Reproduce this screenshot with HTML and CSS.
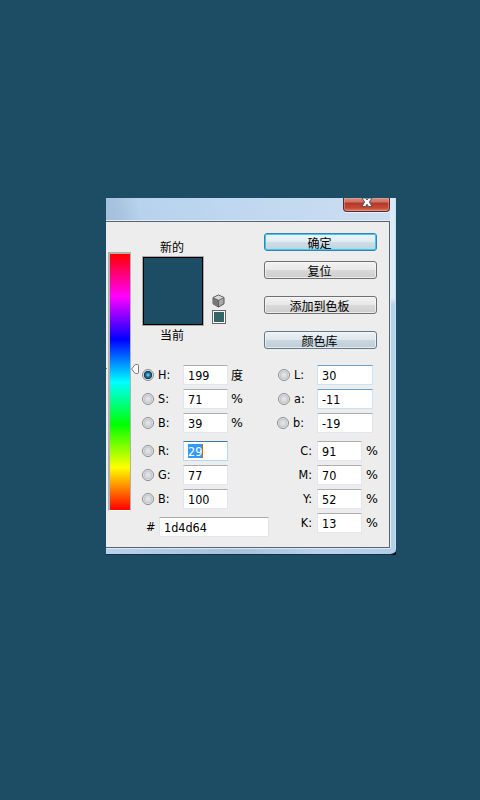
FILE: index.html
```html
<!DOCTYPE html>
<html lang="zh-CN">
<head>
<meta charset="utf-8">
<title>拾色器</title>
<link rel="stylesheet" href="styles.css">
</head>
<body>
<div class="corner">
<main class="dialog">
  <header class="titlebar"><button class="close" aria-label="关闭"><svg width="12" height="10" viewBox="0 0 12 10"><path d="M1 0h3.5L6 2 7.5 0H11L8.4 4 11 8.5H7.4L6 6.2 4.6 8.5H1L3.6 4Z" fill="#fff" stroke="#50545f"/></svg></button></header>
  <div class="content">
    <div class="hue-area">
      <i class="tick"></i>
      <div class="hue"></div>
      <svg class="thumb" width="8" height="10" viewBox="0 0 8 10"><path d="M.7 5 3.5 1.2Q4 .5 5 .5h1.5q1 0 1 1v7q0 1-1 1H5q-1 0-1.5-.7Z" fill="#fafafa" stroke="#777"/></svg>
    </div>
    <section class="left">
      <div class="preview">
        <div class="compare">
          <span>新的</span>
          <div class="swatch"></div>
          <span>当前</span>
        </div>
        <div class="websafe">
          <svg width="13" height="14" viewBox="0 0 13 14"><path d="M6.5 1 12 3.5v6.3L6.5 13 1 9.8V3.5Z" fill="#aaa" stroke="#555"/><path d="M6.5 1.4 11.5 3.7 6.5 6.2 1.5 3.7Z" fill="#d8d8d8"/><path d="M1.5 4 6.5 6.5v6L1.5 9.5Z" fill="#777"/><path d="M1 3.7 6.5 6.3 12 3.7M6.5 6.3V13" fill="none" stroke="#555" stroke-width=".8"/></svg>
          <i class="safe"></i>
        </div>
      </div>
      <div class="rows">
        <div class="row"><i class="radio on"></i><label>H:</label><span class="field">199</span><b class="cjk">度</b></div>
        <div class="row"><i class="radio"></i><label>S:</label><span class="field">71</span><b>%</b></div>
        <div class="row"><i class="radio"></i><label>B:</label><span class="field">39</span><b>%</b></div>
        <div class="row gap"><i class="radio"></i><label>R:</label><span class="field focus"><mark>29</mark></span></div>
        <div class="row"><i class="radio"></i><label>G:</label><span class="field">77</span></div>
        <div class="row"><i class="radio"></i><label>B:</label><span class="field">100</span></div>
        <div class="row hex"><label>#</label><span class="field">1d4d64</span></div>
      </div>
    </section>
    <section class="right">
      <div class="buttons">
        <button class="btn ok">确定</button>
        <button class="btn">复位</button>
        <button class="btn add">添加到色板</button>
        <button class="btn lib">颜色库</button>
      </div>
      <div class="rows">
        <div class="row"><i class="radio"></i><label>L:</label><span class="field wide blue">30</span></div>
        <div class="row"><i class="radio"></i><label>a:</label><span class="field wide blue">-11</span></div>
        <div class="row shift"><i class="radio"></i><label>b:</label><span class="field wide">-19</span></div>
        <div class="row gap ink"><label>C:</label><span class="field">91</span><b>%</b></div>
        <div class="row ink"><label>M:</label><span class="field">70</span><b>%</b></div>
        <div class="row ink"><label>Y:</label><span class="field">52</span><b>%</b></div>
        <div class="row ink"><label>K:</label><span class="field">13</span><b>%</b></div>
      </div>
    </section>
  </div>
</main>
</div>
</body>
</html>
```
FILE: styles.css
```css
* { box-sizing: border-box; }
body {
  margin: 0;
  height: 800px;
  padding: 198px 0 0 106px;
  overflow: hidden;
  background: #1d4d64;
  color: #000;
  font: 12.5px/20px "DejaVu Sans Condensed", "DejaVu Sans", "Noto Sans CJK SC", sans-serif;
  font-stretch: condensed;
}
.corner {
  width: 290px;
  height: 357px;
  background: linear-gradient(#111, #111) right bottom / 6px 6px no-repeat;
}
.dialog {
  width: 290px;
  height: 357px;
  padding-right: 6px;
  border-bottom: 1px solid #17303f;
  border-radius: 0 0 6px 0;
  background:
    linear-gradient(#dbe8f6 0, #e0edf9 100px, #b8d2ec 106px, #b5cfe9 100%) right / 6px 100% no-repeat,
    linear-gradient(90deg, #b9d3ee, #a5c1dc 45%, #b9d3ee 75%, #b0cce8) bottom / 100% 8px no-repeat,
    linear-gradient(60deg, #a4bfdc 0, #b5d0eb 40px, #b6d1ed 180px, #ccdff2 100%);
  box-shadow: inset -1px 0 #c2e0f2;
}
.titlebar {
  display: flex;
  justify-content: flex-end;
  height: 23px;
  background: linear-gradient(75deg, #a4bfdc 0, #a9c4e0 16px, #b5d0eb00 36px);
}
.close {
  display: flex;
  justify-content: center;
  width: 47px;
  height: 14px;
  padding: 0;
  border: 1px solid #562b30;
  border-top: 0;
  border-radius: 0 0 4px 4px;
  background: linear-gradient(#d48c7e 0, #cb7467 4px, #b73626 5px, #c64a35 10px, #dc8068 100%);
  box-shadow: inset 0 0 0 1px #e6a99d80, 0 1px #e8f2fb;
}
.close svg { flex: none; margin-left: 1px; }
.content {
  display: flex;
  height: 327px;
  border: 1px solid #59636e;
  border-left: 0;
  background: #ededed;
  box-shadow: 0 -1px #e4eef8, 1px 0 #e4eef8, 0 1px #dce9f5;
}
.hue-area {
  display: flex;
  width: 36px;
  padding-top: 30px;
}
.tick {
  width: 1px;
  height: 1px;
  margin: 116px 1px 0 0;
  background: #777;
}
.hue {
  width: 23px;
  height: 259px;
  border: solid #b0b0b0;
  border-width: 2px 1px 1px 2px;
  border-bottom-color: #fff;
  background: linear-gradient(#f00, #f0f 16.67%, #00f 33.33%, #0ff 50%, #0f0 66.67%, #ff0 83.33%, #f00);
}
.thumb { margin: 112px 0 0; flex: none; }
.left { width: 122px; }
.preview {
  display: flex;
  height: 143px;
  padding-top: 15px;
}
.compare {
  display: flex;
  flex-direction: column;
  align-items: center;
  width: 62px;
  line-height: 22px;
  font-size: 12px;
}
.compare span { height: 19px; margin-right: 2px; }
.swatch {
  width: 62px;
  height: 70px;
  border: 1px solid #aaa;
  background: #1d4d64;
  box-shadow: inset 0 0 0 1px #000;
}
.swatch + span { line-height: 21px; }
.websafe {
  display: flex;
  flex-direction: column;
  align-items: center;
  margin: 57px 0 0 8px;
  width: 14px;
}
.websafe svg { flex: none; margin-right: 1px; }
.safe {
  width: 14px;
  height: 14px;
  margin-top: 2px;
  border: 1px solid #666;
  background: #336666;
  box-shadow: inset 0 0 0 1px #fff;
}
.row {
  display: flex;
  height: 20px;
  margin-bottom: 4px;
}
.row.gap { margin-top: 8px; }
.radio {
  flex: none;
  width: 12px;
  height: 12px;
  margin: 4px 4px 0 0;
  border: 1px solid #8a8a8a;
  border-radius: 50%;
  background: radial-gradient(circle 6px, #e6e8ea 0, #d2d5da 55%, #bcc0c6 66%, #f3f3f3 80%);
}
.radio.on {
  background: radial-gradient(circle 6px, #8bdcf8 0, #2785b1 30%, #12374d 62%, #d7e3eb 76%, #f3f3f3 85%);
}
.row label { width: 25px; line-height: 19px; }
.field {
  flex: none;
  width: 45px;
  height: 20px;
  padding-left: 4px;
  border: 1px solid #e1e5ec;
  border-top-color: #abadb3;
  border-radius: 1px;
  background: #fff;
  line-height: 20px;
}
.row b {
  margin-left: 3px;
  font: 400 12.5px/19px "DejaVu Sans", sans-serif;
  font-stretch: normal;
}
.row .cjk { font: 12px/19px "Noto Sans CJK SC", sans-serif; }
.field.focus { border-color: #b7d8ed; border-top-color: #3d7bad; }
.field.blue { border-color: #c8e3f5; border-top-color: #6ba0cb; }
mark {
  display: block;
  width: 15px;
  height: 14px;
  margin-top: 2px;
  border-right: 1px solid #cc6a00;
  background: #3399ff;
  color: #fff;
  line-height: 16px;
}
.row.hex { margin: 8px 0 0 4px; }
.row.hex label { flex: none; width: 13px; line-height: 20px; }
.hex .field { width: 110px; }
.right { width: 113px; }
.buttons {
  display: flex;
  flex-direction: column;
  height: 143px;
  padding-top: 11px;
}
.btn {
  width: 113px;
  height: 18px;
  margin: 0 0 10px;
  padding: 0 2px 0 0;
  border: 1px solid #707070;
  border-radius: 3px;
  background: linear-gradient(#f2f2f2, #e8e8e8 49%, #d9d9d9 51%, #cecece);
  box-shadow: inset 0 0 0 1px #f8f8f8b0;
  color: #000;
  font: 12px/18px "Noto Sans CJK SC", sans-serif;
}
.btn.ok {
  border-color: #3c7fb1;
  background: linear-gradient(#eff5f8, #dfebf1 49%, #cfdee6 51%, #bed4df);
  box-shadow: inset 0 0 0 1px #38cbf4;
}
.btn.add { margin: 7px 0 17px; }
.btn.lib {
  border-color: #62788b;
  background: linear-gradient(#edf2f5, #dfe7ec 49%, #cbd7df 51%, #bdcdd6);
}
.right .rows { padding-left: 14px; }
.right label { width: 23px; }
.right .wide { width: 56px; }
.shift { margin-left: -1px; }
.right .shift label { width: 24px; }
.right .ink label {
  flex: none;
  width: 34px;
  margin-right: 5px;
  text-align: right;
}
.ink b { margin-left: 4px; }
```
